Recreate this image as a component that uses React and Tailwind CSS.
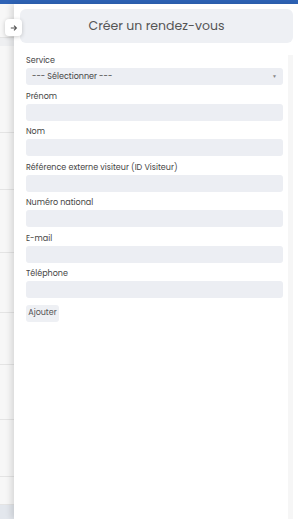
import React from "react";

const fields = [
  "Prénom",
  "Nom",
  "Référence externe visiteur (ID Visiteur)",
  "Numéro national",
  "E-mail",
  "Téléphone",
];

// heights of the rows of the app list peeking out behind the panel
const stripRows = [34, 8, 87, 57, 63, 60, 52, 55, 57, 28];

const App = () => {
  return (
    <div
      className="relative w-full h-[519px] overflow-hidden bg-white"
      style={{ fontFamily: "Poppins, 'Noto Sans', 'Open Sans', sans-serif" }}
    >
      <div className="h-[4px] bg-[#2e63b6]" />
      <div className="flex h-[515px]">
        {/* background app strip */}
        <div className="w-[14px] flex flex-col bg-[#f7f7f7]">
          {stripRows.map((h, i) => (
            <div
              key={i}
              className={i === 1 ? "bg-[#eeeff1]" : "border-b border-[#e4e4e4]"}
              style={{ height: h }}
            />
          ))}
          <div className="flex-1 bg-[#e3e7ed]" />
        </div>

        {/* side panel */}
        <div className="flex-1 flex flex-col bg-white shadow-[-3px_0_6px_rgba(0,0,0,0.12)] z-10">
          <div className="mt-[5px] ml-[6px] mr-[5px] h-[34px] rounded-[6px] bg-[#eef0f4] flex items-center justify-center">
            <h2 className="text-[12.5px] text-[#555]">Créer un rendez-vous</h2>
          </div>
          <div className="flex flex-1 mt-[12px]">
            <div className="flex-1 pl-[12px] pr-[5px] flex flex-col">
              <label className="text-[8px] text-[#444] leading-[12px] h-[12px]">Service</label>
              <div className="mt-[1px] h-[17px] rounded-[3px] bg-[#eceef3] flex items-center justify-between px-[6px]">
                <span className="text-[8px] text-[#444]">--- Sélectionner ---</span>
                <span className="text-[5px] text-[#888]">▼</span>
              </div>
              {fields.map((f) => (
                <div key={f} className="flex flex-col">
                  <label className="mt-[5.5px] text-[8px] text-[#444] leading-[12px] h-[12px]">{f}</label>
                  <div className="mt-[1px] h-[17px] rounded-[3px] bg-[#eceef3]" />
                </div>
              ))}
              <div>
                <button className="mt-[6px] h-[17px] w-[33px] rounded-[3px] bg-[#eef0f4] text-[8px] text-[#555]">
                  Ajouter
                </button>
              </div>
            </div>
            <div className="w-[5px] mr-[5px] bg-[#f6f6f6]" />
          </div>
        </div>
      </div>

      {/* collapse button */}
      <button className="absolute left-[5px] top-[19px] w-[17px] h-[17px] rounded-[4px] bg-white shadow-[0_1px_4px_rgba(0,0,0,0.2)] flex items-center justify-center z-20">
        <svg width="8" height="8" viewBox="0 0 10 10" fill="none" stroke="#555" strokeWidth="1.4">
          <path d="M1 5h7M5 2l3 3-3 3" />
        </svg>
      </button>
    </div>
  );
};

export default App;
